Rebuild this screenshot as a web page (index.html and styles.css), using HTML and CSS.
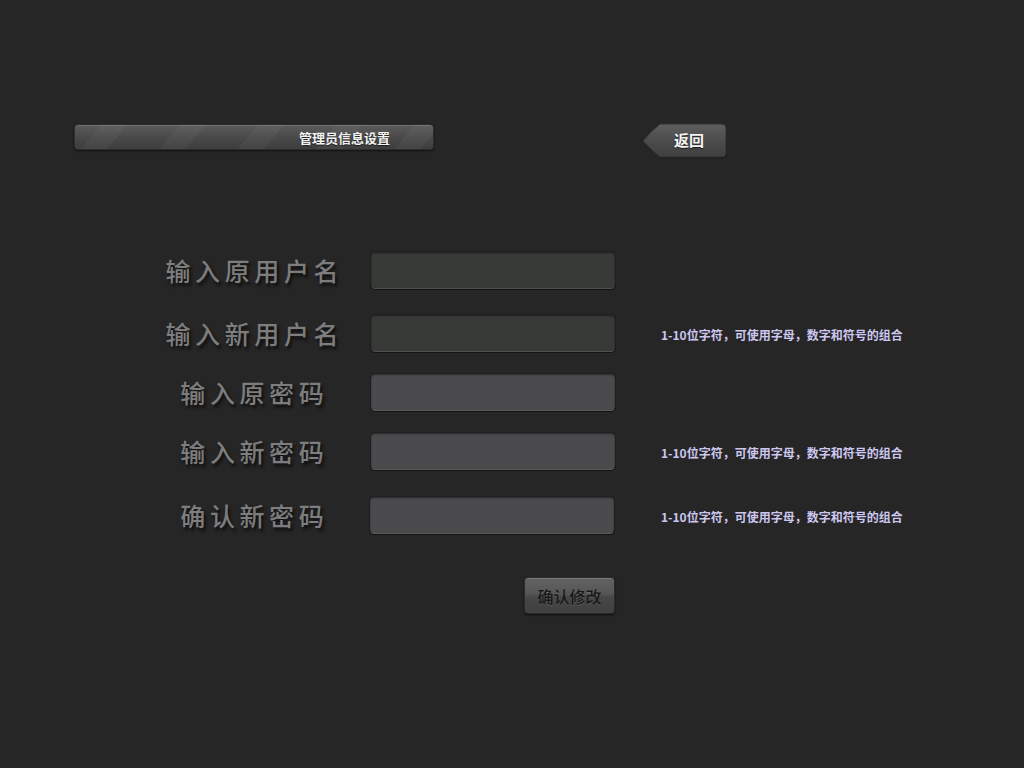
FILE: index.html
```html
<!DOCTYPE html>
<html lang="zh-CN">
<head>
<meta charset="utf-8">
<title>管理员信息设置</title>
<link rel="stylesheet" href="styles.css">
</head>
<body>
<div class="page">
  <header class="topbar">
    <div class="title-bar"><span class="title-text">管理员信息设置</span></div>
    <button class="back-btn" type="button">
      <svg class="back-shape" width="86" height="36" viewBox="0 0 86 36" aria-hidden="true">
        <defs>
          <linearGradient id="bg" x1="0" y1="0" x2="0" y2="1">
            <stop offset="0" stop-color="#5e5e5e"/>
            <stop offset="0.5" stop-color="#4c4c4c"/>
            <stop offset="1" stop-color="#3f3f3f"/>
          </linearGradient>
        </defs>
        <path d="M18 1 H80 Q84 1 84 5 V30 Q84 34 80 34 H18 Q8 26 1 18 Q8 9 18 1 Z" fill="#1a1a1a" transform="translate(1,1.5)" opacity="0.7"/>
        <path d="M18 1 H80 Q84 1 84 5 V30 Q84 34 80 34 H18 Q8 26 1 18 Q8 9 18 1 Z" fill="url(#bg)" stroke="#333" stroke-width="1"/>
      </svg>
      <span class="back-text">返回</span>
    </button>
  </header>

  <main class="form">
    <div class="row r1">
      <label class="label">输入原用户名</label>
      <div class="field field-green"></div>
    </div>
    <div class="row r2">
      <label class="label">输入新用户名</label>
      <div class="field field-green"></div>
      <span class="hint">1-10位字符，可使用字母，数字和符号的组合</span>
    </div>
    <div class="row r3">
      <label class="label">输入原密码</label>
      <div class="field"></div>
    </div>
    <div class="row r4">
      <label class="label">输入新密码</label>
      <div class="field"></div>
      <span class="hint">1-10位字符，可使用字母，数字和符号的组合</span>
    </div>
    <div class="row r5">
      <label class="label">确认新密码</label>
      <div class="field field-shift"></div>
      <span class="hint">1-10位字符，可使用字母，数字和符号的组合</span>
    </div>
    <div class="actions">
      <button class="confirm-btn" type="button">确认修改</button>
    </div>
  </main>
</div>
</body>
</html>
```

FILE: styles.css
```css
html, body {
  margin: 0;
  padding: 0;
  background: #262626;
}
body {
  width: 1024px;
  height: 768px;
  overflow: hidden;
  font-family: "Noto Sans CJK SC", "Noto Sans", sans-serif;
}
.page {
  padding-top: 124px;
}
.topbar {
  display: flex;
  align-items: flex-start;
  padding-left: 74px;
}
.title-bar {
  box-sizing: border-box;
  width: 360px;
  height: 26px;
  border-radius: 4px;
  border: 1px solid #2e2e2e;
  background:
    repeating-linear-gradient(130deg, rgba(255,255,255,0) 0 20px, rgba(255,255,255,0.035) 20px 40px, rgba(255,255,255,0) 40px 60px),
    linear-gradient(#5b5b5b 0%, #4a4a4a 50%, #3d3d3d 100%);
  box-shadow: 0 1px 2px rgba(0,0,0,0.6), inset 0 1px 0 rgba(255,255,255,0.12);
  display: flex;
  align-items: center;
  justify-content: flex-end;
  padding-right: 43px;
}
.title-text {
  color: #f2f2f2;
  font-size: 13px;
  font-weight: 700;
  line-height: 1;
  text-shadow: 0 1px 1px rgba(0,0,0,0.6);
}
.back-btn {
  position: relative;
  margin-left: 208px;
  margin-top: -1px;
  width: 86px;
  height: 36px;
  padding: 0;
  border: 0;
  background: none;
  cursor: pointer;
}
.back-shape {
  position: absolute;
  left: 0;
  top: 0;
}
.back-text {
  position: absolute;
  left: 32px;
  top: 7px;
  color: #f4f4f4;
  font-size: 15px;
  font-weight: 700;
  line-height: 20px;
  font-family: "Noto Sans CJK SC", sans-serif;
  text-shadow: 0 1px 1px rgba(0,0,0,0.6);
}

.form {
  display: flex;
  flex-direction: column;
  padding-top: 92px;
}
.row {
  display: flex;
  align-items: center;
  height: 38px;
}
.r2 { margin-top: 25px; }
.r3 { margin-top: 21px; }
.r4 { margin-top: 21px; }
.r5 { margin-top: 26px; }
.label {
  width: 210px;
  margin-left: 147px;
  margin-right: 13px;
  text-align: center;
  color: #7d7d7d;
  font-size: 25px;
  font-weight: 500;
  letter-spacing: 4.6px;
  text-indent: 4.6px;
  line-height: 38px;
  text-shadow: 2px 3px 3px #0e0e0e;
}
.field {
  box-sizing: border-box;
  width: 246px;
  height: 38px;
  border-radius: 5px;
  background: #4b4a4d;
  border: 1px solid #1f1f1f;
  border-bottom-color: #5a5a5a;
  box-shadow: inset 0 1px 2px rgba(0,0,0,0.45), 0 1px 0 rgba(0,0,0,0.5);
  flex: none;
}
.field-green {
  background: #383a38;
  border-bottom-color: #505050;
}
.field-shift {
  margin-left: -1px;
  margin-right: 1px;
}
.hint {
  margin-left: 45px;
  padding-top: 3px;
  color: #cdc6ee;
  font-size: 12px;
  font-weight: 700;
  white-space: nowrap;
  font-family: "Noto Sans CJK SC", sans-serif;
}
.actions {
  display: flex;
  margin-top: 43px;
  padding-left: 524px;
}
.confirm-btn {
  box-sizing: border-box;
  width: 91px;
  height: 37px;
  border-radius: 4px;
  border: 1px solid #2c2c2c;
  background: linear-gradient(#626262 0%, #565656 45%, #474747 55%, #404040 100%);
  box-shadow: 0 1px 2px rgba(0,0,0,0.7), inset 0 1px 0 rgba(255,255,255,0.15);
  color: #181818;
  font-family: "Noto Sans CJK SC", sans-serif;
  font-size: 16px;
  font-weight: 500;
  padding: 0;
  text-shadow: 0 1px 0 rgba(255,255,255,0.12);
  cursor: pointer;
}
```
